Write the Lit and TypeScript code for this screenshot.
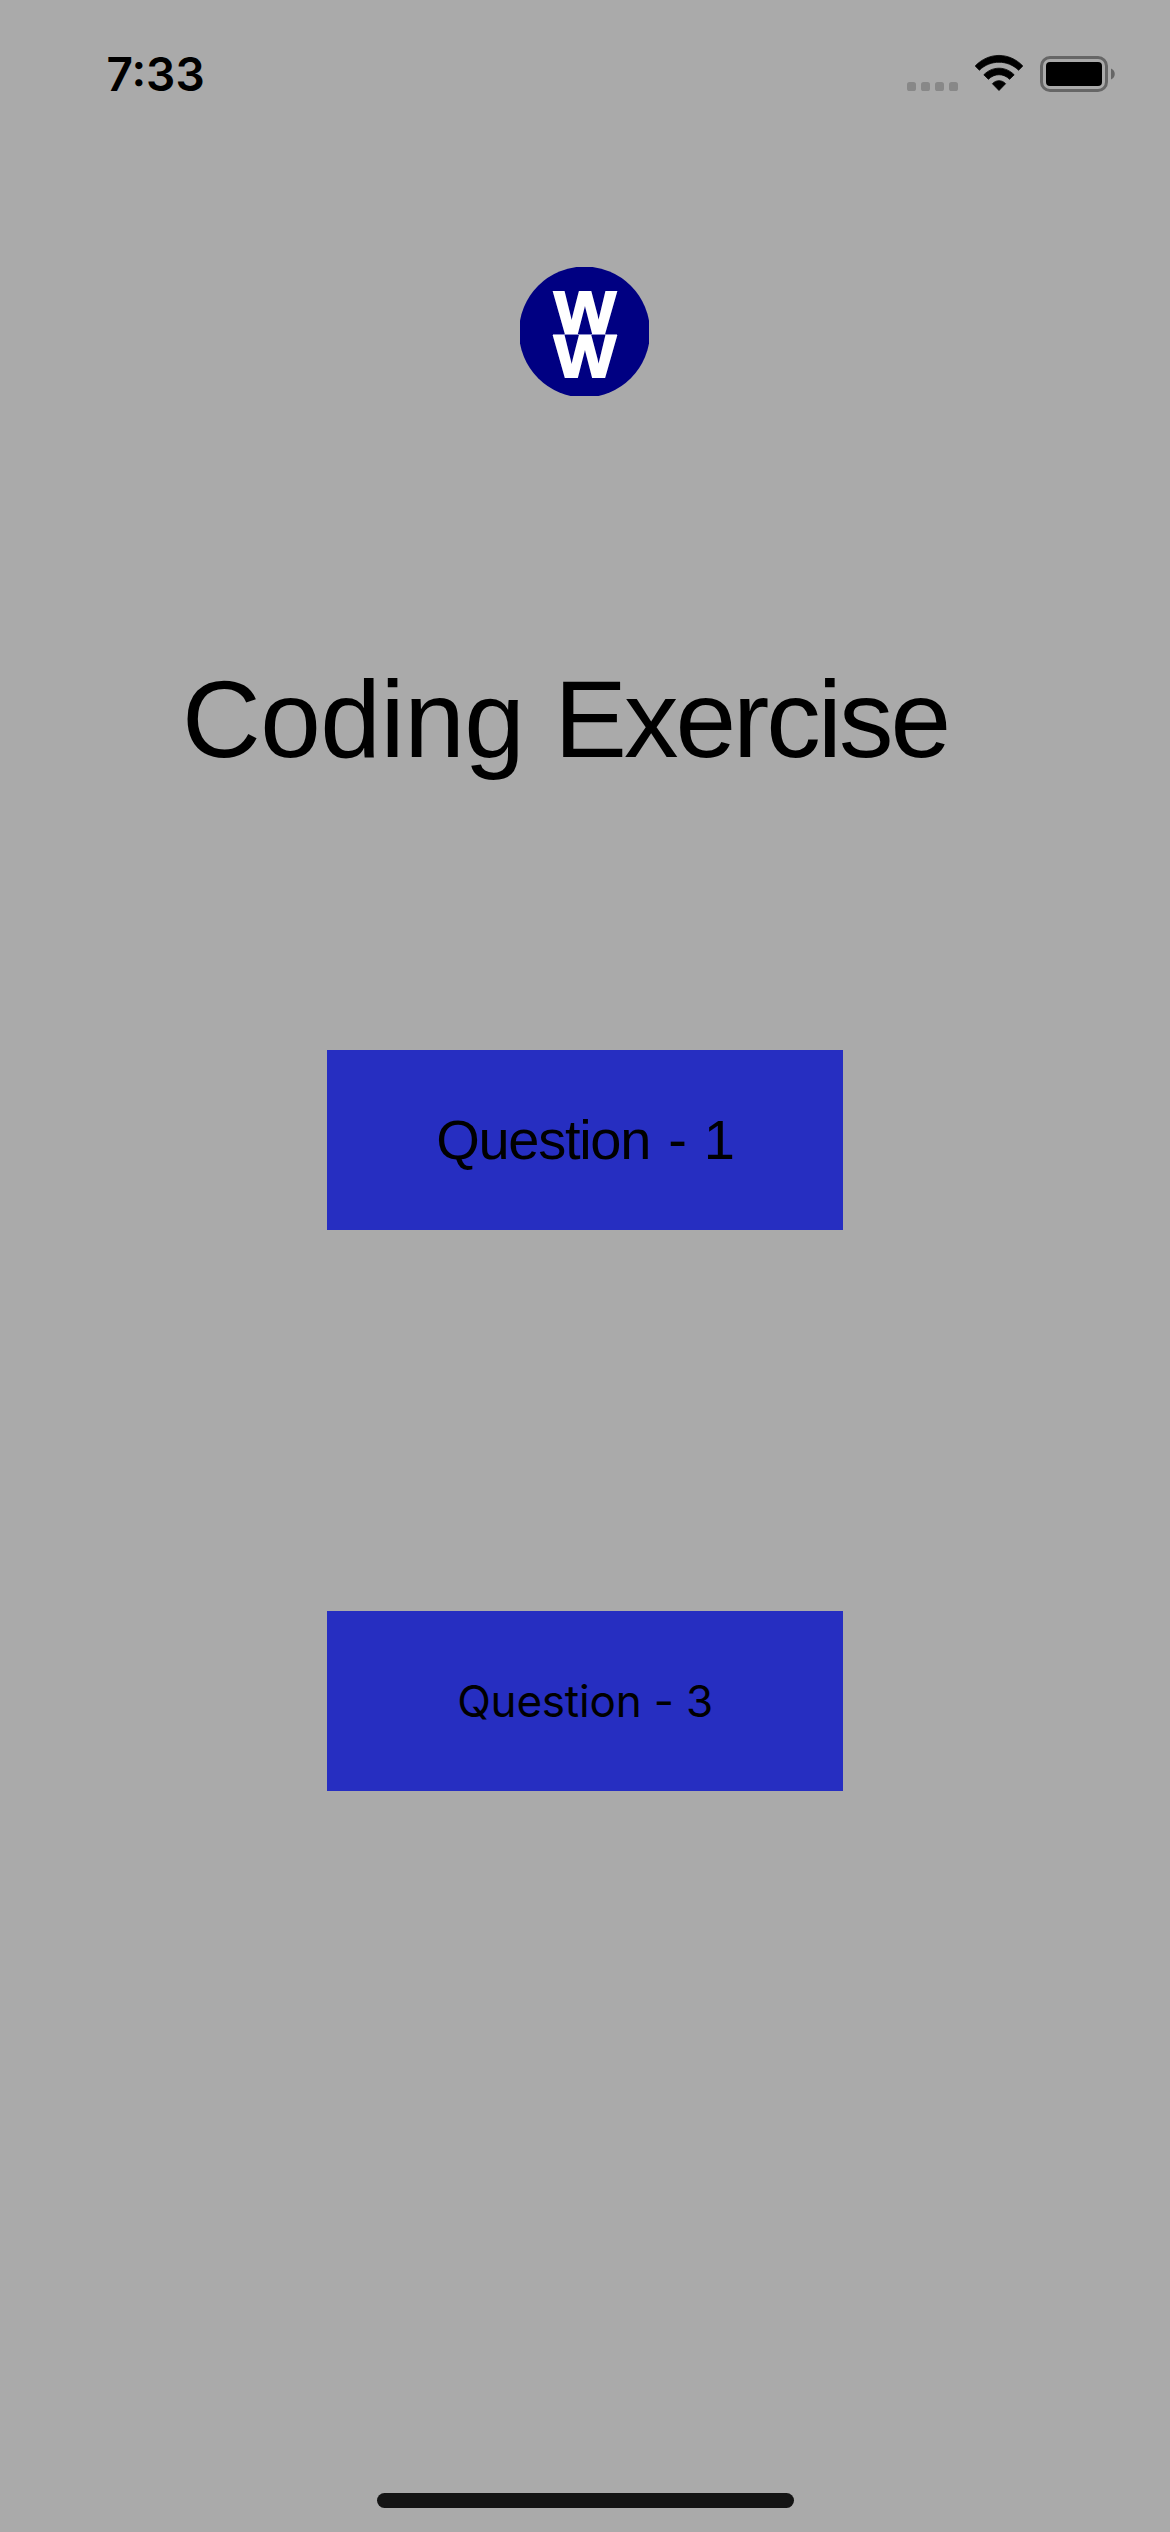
import { LitElement, html, css } from "lit";
import { customElement, property } from "lit/decorators.js";

@customElement("status-bar")
class StatusBar extends LitElement {
  @property() time = "";
  static styles = css`
    :host { display: flex; justify-content: space-between; align-items: flex-start; height: 141px; padding: 0 54px 0 106.5px; box-sizing: border-box; }
    .time { margin-top: 46px; font: 600 46px/56px Inter, "Liberation Sans", sans-serif; }
    .icons { display: block; margin-top: 52px; }
  `;
  render() {
    return html`
      <span class="time">${this.time}</span>
      <svg class="icons" width="210" height="44" viewBox="906 52 210 44">
        <g fill="#888">
          <rect x="907" y="82" width="9" height="9" rx="2.6" />
          <rect x="921" y="82" width="9" height="9" rx="2.6" />
          <rect x="935" y="82" width="9" height="9" rx="2.6" />
          <rect x="949" y="82" width="9" height="9" rx="2.6" />
        </g>
        <g stroke="#000" stroke-width="0.8" stroke-linejoin="round">
          <path d="M975.2 66C988.500 51.900 1009.500 51.900 1022.800 66L1018.600 70.200C1007.700 59.600 990.300 59.600 979.400 70.200Z" />
          <path d="M983.800 74.800C992.300 66 1005.700 66 1014.200 74.800L1009.600 79.300C1003.500 73.200 994.500 73.200 988.400 79.300Z" />
          <path d="M992.400 83.700C996 79.700 1002 79.700 1005.600 83.700L999 90.500Z" />
        </g>
        <rect x="1041.500" y="57.500" width="65" height="33" rx="8.500" fill="none" stroke="#666" stroke-width="3" />
        <rect x="1046" y="62" width="56" height="24" rx="4" />
        <path d="M1111 68.500C1116 70.200 1116 77.800 1111 79.500Z" fill="#666" />
      </svg>
    `;
  }
}

@customElement("brand-logo")
class BrandLogo extends LitElement {
  static styles = css`
    :host { display: block; width: 130px; height: 130px; }
    svg { display: block; overflow: hidden; }
    .letter { font: 700 60px "Liberation Sans", Arial, sans-serif; fill: #fff; stroke: #fff; stroke-width: 2px; }
  `;
  render() {
    return html`
      <svg width="129" height="129" viewBox="0 0 129 129">
        <circle cx="64.500" cy="65" r="65.500" fill="#000082" />
        <text class="letter"><tspan x="34" y="66" textLength="62" lengthAdjust="spacingAndGlyphs">W</tspan><tspan x="34" y="110" textLength="62" lengthAdjust="spacingAndGlyphs">W</tspan></text>
        <rect x="33" y="67" width="64" height="1" fill="#8a8acb" />
      </svg>
    `;
  }
}

@customElement("app-root")
class AppRoot extends LitElement {
  static styles = css`
    :host { display: flex; flex-direction: column; width: 1170px; height: 2532px; box-sizing: border-box; background: #aaa; color: #000; overflow: hidden; }
    status-bar { flex: none; }
    .content { flex: 1; display: flex; flex-direction: column; align-items: center; padding-top: 126px; }
    .title { align-self: flex-start; margin: 257px 0 0 182px; font: 400 109px/130px "Liberation Sans", Arial, sans-serif; letter-spacing: -0.5px; white-space: nowrap; }
    .tight { letter-spacing: -3px; }
    .action { width: 516px; height: 180px; margin: 0; padding: 0; border: 0; border-radius: 0; background: #262ec1; color: #000; display: flex; align-items: center; justify-content: center; white-space: nowrap; }
    .first { margin-top: 266px; font: 400 56px/64px "Liberation Sans", Arial, sans-serif; letter-spacing: -1.3px; word-spacing: 4px; }
    .second { margin-top: 381px; font: 400 44px/54px Inter, "Liberation Sans", sans-serif; letter-spacing: -0.2px; font-feature-settings: "calt" 0; }
    .home { align-self: center; flex: none; width: 417px; height: 15px; border-radius: 8px; background: #141414; margin-bottom: 24px; }
  `;
  render() {
    return html`
      <status-bar time="7:33"></status-bar>
      <main class="content">
        <brand-logo></brand-logo>
        <h1 class="title">Coding <span class="tight">Exercise</span></h1>
        <button class="action first">Question - 1</button>
        <button class="action second">Question - 3</button>
      </main>
      <div class="home"></div>
    `;
  }
}
